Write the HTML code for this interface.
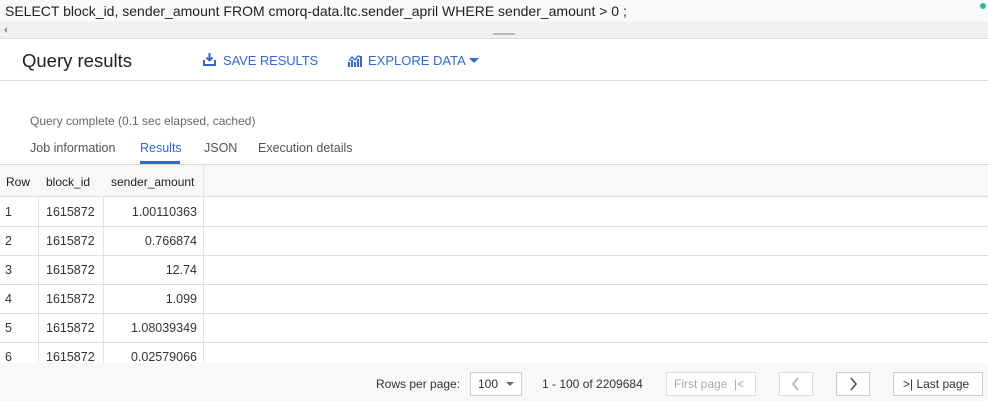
<!DOCTYPE html>
<html><head><meta charset="utf-8"><style>
*{margin:0;padding:0;box-sizing:border-box}
body{width:988px;height:401px;overflow:hidden;background:#fff;font-family:"Liberation Sans",Roboto,sans-serif;position:relative;color:#202124}
.a{position:absolute}
</style></head><body>
<div class="a" style="left:0;top:0;width:988px;height:22px;background:#f9f9f9"></div>
<div class="a" style="left:5px;top:3px;font-size:14px;color:#222">SELECT block_id, sender_amount FROM cmorq-data.ltc.sender_april WHERE sender_amount &gt; 0 ;</div>
<div class="a" style="left:980px;top:3px;width:6px;height:6px;border-radius:50%;background:#1ec19a"></div>
<div class="a" style="left:0;top:22px;width:988px;height:17px;background:#f0f0f0;border-bottom:1px solid #ddd"></div>
<div class="a" style="left:4px;top:27px;width:0;height:0;border-top:3px solid transparent;border-bottom:3px solid transparent;border-right:3px solid #999"></div>
<div class="a" style="left:493px;top:33px;width:22px;height:2px;background:#bbb"></div>
<div class="a" style="left:22px;top:50px;font-size:18.5px;color:#202124">Query results</div>
<svg class="a" style="left:203px;top:53px" width="13" height="13" viewBox="0 0 13 13"><path d="M6.5 0v7M3.5 4.5l3 3 3-3" stroke="#3367d6" stroke-width="2" fill="none"/><path d="M1 7v5h11V7" stroke="#3367d6" stroke-width="2" fill="none"/></svg>
<div class="a" style="left:223px;top:53px;font-size:13px;color:#3367d6;letter-spacing:-.1px">SAVE RESULTS</div>
<svg class="a" style="left:348px;top:54px" width="15" height="13" viewBox="0 0 15 13"><path d="M1 13V8M4 13V6M7 13V8M10 13V5M13 13V3" stroke="#3367d6" stroke-width="2"/><path d="M1 7l3-4 3 3 3-4 4 1" stroke="#3367d6" stroke-width="1.3" fill="none"/></svg>
<div class="a" style="left:368px;top:53px;font-size:13px;color:#3367d6">EXPLORE DATA</div>
<div class="a" style="left:469px;top:58px;border-left:5px solid transparent;border-right:5px solid transparent;border-top:5px solid #3367d6"></div>
<div class="a" style="left:0;top:80px;width:988px;height:1px;background:#ddd"></div>
<div class="a" style="left:30px;top:114px;font-size:12px;color:#666">Query complete (0.1 sec elapsed, cached)</div>
<div class="a" style="left:30px;top:141px;font-size:12.5px;color:#555">Job information</div>
<div class="a" style="left:140px;top:141px;font-size:12.5px;color:#3367d6">Results</div>
<div class="a" style="left:140px;top:161px;width:40px;height:3px;background:#3367d6"></div>
<div class="a" style="left:204px;top:141px;font-size:12.5px;color:#555">JSON</div>
<div class="a" style="left:258px;top:141px;font-size:12.5px;color:#555">Execution details</div>
<div class="a" style="left:0;top:164px;width:988px;height:33px;background:#f8f8f8;border-top:1px solid #ddd;border-bottom:1px solid #ddd"></div>
<div class="a" style="left:6px;top:175px;font-size:12px">Row</div>
<div class="a" style="left:46px;top:175px;font-size:12px">block_id</div>
<div class="a" style="left:111px;top:175px;font-size:12px">sender_amount</div>
<div class="a" style="left:38px;top:196px;width:1px;height:167px;background:#e4e4e4"></div>
<div class="a" style="left:103px;top:196px;width:1px;height:167px;background:#e4e4e4"></div>
<div class="a" style="left:203px;top:165px;width:1px;height:198px;background:#e4e4e4"></div>
<div class="a" style="left:0;top:226px;width:988px;height:1px;background:#ddd"></div>
<div class="a" style="left:0;top:255px;width:988px;height:1px;background:#ddd"></div>
<div class="a" style="left:0;top:284px;width:988px;height:1px;background:#ddd"></div>
<div class="a" style="left:0;top:313px;width:988px;height:1px;background:#ddd"></div>
<div class="a" style="left:0;top:342px;width:988px;height:1px;background:#ddd"></div>
<div style="font-size:12.5px;color:#333">
<div class="a" style="left:5px;top:205px">1</div><div class="a" style="left:46px;top:205px">1615872</div><div class="a" style="left:104px;width:93px;text-align:right;top:205px">1.00110363</div>
<div class="a" style="left:5px;top:234px">2</div><div class="a" style="left:46px;top:234px">1615872</div><div class="a" style="left:104px;width:93px;text-align:right;top:234px">0.766874</div>
<div class="a" style="left:5px;top:263px">3</div><div class="a" style="left:46px;top:263px">1615872</div><div class="a" style="left:104px;width:93px;text-align:right;top:263px">12.74</div>
<div class="a" style="left:5px;top:292px">4</div><div class="a" style="left:46px;top:292px">1615872</div><div class="a" style="left:104px;width:93px;text-align:right;top:292px">1.099</div>
<div class="a" style="left:5px;top:321px">5</div><div class="a" style="left:46px;top:321px">1615872</div><div class="a" style="left:104px;width:93px;text-align:right;top:321px">1.08039349</div>
<div class="a" style="left:5px;top:350px">6</div><div class="a" style="left:46px;top:350px">1615872</div><div class="a" style="left:104px;width:93px;text-align:right;top:350px">0.02579066</div>
</div>
<div class="a" style="left:0;top:363px;width:988px;height:38px;background:#f8f8f8"></div>
<div class="a" style="left:376px;top:377px;font-size:12px;color:#333">Rows per page:</div>
<div class="a" style="left:470px;top:372px;width:52px;height:24px;border:1px solid #ccc;background:#fff"></div>
<div class="a" style="left:478px;top:377px;font-size:12px;color:#333">100</div>
<div class="a" style="left:506px;top:382px;border-left:4px solid transparent;border-right:4px solid transparent;border-top:4px solid #666"></div>
<div class="a" style="left:542px;top:377px;font-size:12px;color:#333">1 - 100 of 2209684</div>
<div class="a" style="left:666px;top:372px;width:90px;height:24px;border:1px solid #ddd;background:#fff"></div>
<div class="a" style="left:674px;top:377px;font-size:12px;color:#aaa">First page &nbsp;|&lt;</div>
<div class="a" style="left:779px;top:372px;width:34px;height:24px;border:1px solid #ddd;background:#fff"></div>
<svg class="a" style="left:791px;top:377px" width="10" height="14"><path d="M7 1L2 7l5 6" stroke="#aaa" stroke-width="1.6" fill="none"/></svg>
<div class="a" style="left:836px;top:372px;width:34px;height:24px;border:1px solid #ccc;background:#fff"></div>
<svg class="a" style="left:848px;top:377px" width="10" height="14"><path d="M3 1l5 6-5 6" stroke="#555" stroke-width="1.6" fill="none"/></svg>
<div class="a" style="left:893px;top:372px;width:90px;height:24px;border:1px solid #ccc;background:#fff"></div>
<div class="a" style="left:903px;top:377px;font-size:12px;color:#333">&gt;| Last page</div>
</body></html>
